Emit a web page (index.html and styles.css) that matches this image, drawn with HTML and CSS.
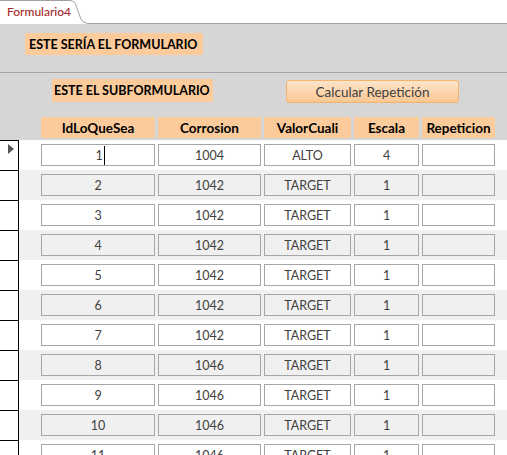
FILE: index.html
```html
<!DOCTYPE html>
<html lang="es">
<head>
<meta charset="utf-8">
<title>Formulario4</title>
<link rel="stylesheet" href="styles.css">
</head>
<body>
<div class="screen">
  <div class="tabbar">
    <div class="tab">
      <svg class="tab-shape" width="90" height="24" viewBox="0 0 90 24">
        <path d="M0 0 H70 Q74 0.5 75.5 4 L80.5 18 Q82.5 23.5 90 23.5 V24 H0 Z" fill="#ffffff"/>
        <path d="M0 0.5 H70 Q74 0.5 75.5 4 L80.5 18 Q82.5 23.5 90 23.5" fill="none" stroke="#a0a0a0" stroke-width="1"/>
      </svg>
      <span class="tab-label">Formulario4</span>
    </div>
    <div class="tab-rule"></div>
  </div>

  <div class="form-header">
    <div class="label label-main">ESTE SERÍA EL FORMULARIO</div>
  </div>

  <div class="subform">
    <div class="sub-top">
      <div class="label label-sub">ESTE EL SUBFORMULARIO</div>
      <button class="btn" type="button">Calcular Repetición</button>
    </div>
    <div class="cols">
      <div class="col-head">IdLoQueSea</div>
      <div class="col-head">Corrosion</div>
      <div class="col-head">ValorCuali</div>
      <div class="col-head">Escala</div>
      <div class="col-head">Repeticion</div>
    </div>
  </div>

  <div class="rows">
    <div class="row">
      <div class="selector"><span class="arrow"></span></div>
      <div class="cells">
        <div class="field"><span class="caret-wrap">1<span class="caret"></span></span></div>
        <div class="field">1004</div>
        <div class="field">ALTO</div>
        <div class="field">4</div>
        <div class="field"></div>
      </div>
    </div>
    <div class="row alt">
      <div class="selector"></div>
      <div class="cells">
        <div class="field">2</div><div class="field">1042</div><div class="field">TARGET</div><div class="field">1</div><div class="field"></div>
      </div>
    </div>
    <div class="row">
      <div class="selector"></div>
      <div class="cells">
        <div class="field">3</div><div class="field">1042</div><div class="field">TARGET</div><div class="field">1</div><div class="field"></div>
      </div>
    </div>
    <div class="row alt">
      <div class="selector"></div>
      <div class="cells">
        <div class="field">4</div><div class="field">1042</div><div class="field">TARGET</div><div class="field">1</div><div class="field"></div>
      </div>
    </div>
    <div class="row">
      <div class="selector"></div>
      <div class="cells">
        <div class="field">5</div><div class="field">1042</div><div class="field">TARGET</div><div class="field">1</div><div class="field"></div>
      </div>
    </div>
    <div class="row alt">
      <div class="selector"></div>
      <div class="cells">
        <div class="field">6</div><div class="field">1042</div><div class="field">TARGET</div><div class="field">1</div><div class="field"></div>
      </div>
    </div>
    <div class="row">
      <div class="selector"></div>
      <div class="cells">
        <div class="field">7</div><div class="field">1042</div><div class="field">TARGET</div><div class="field">1</div><div class="field"></div>
      </div>
    </div>
    <div class="row alt">
      <div class="selector"></div>
      <div class="cells">
        <div class="field">8</div><div class="field">1046</div><div class="field">TARGET</div><div class="field">1</div><div class="field"></div>
      </div>
    </div>
    <div class="row">
      <div class="selector"></div>
      <div class="cells">
        <div class="field">9</div><div class="field">1046</div><div class="field">TARGET</div><div class="field">1</div><div class="field"></div>
      </div>
    </div>
    <div class="row alt">
      <div class="selector"></div>
      <div class="cells">
        <div class="field">10</div><div class="field">1046</div><div class="field">TARGET</div><div class="field">1</div><div class="field"></div>
      </div>
    </div>
    <div class="row">
      <div class="selector"></div>
      <div class="cells">
        <div class="field">11</div><div class="field">1046</div><div class="field">TARGET</div><div class="field">1</div><div class="field"></div>
      </div>
    </div>
  </div>
</div>
</body>
</html>
```

FILE: styles.css
```css
* { box-sizing: border-box; }

html, body {
  margin: 0;
  padding: 0;
  background: #ffffff;
}

.screen {
  width: 507px;
  height: 455px;
  overflow: hidden;
  font-family: Lato, "Open Sans", "DejaVu Sans", sans-serif;
  font-size: 12.5px;
  color: #404040;
}

/* ---- tab strip ---- */
.tabbar {
  display: flex;
  height: 24px;
  background: #ffffff;
}

.tab {
  position: relative;
  width: 90px;
  height: 24px;
  flex: none;
}

.tab-shape {
  position: absolute;
  left: 0;
  top: 0;
}

.tab-label {
  position: relative;
  display: block;
  padding: 4px 0 0 7px;
  font-size: 12px;
  line-height: 15px;
  font-weight: 500;
  color: #a5282c;
}

.tab-rule {
  flex: 1;
  height: 24px;
  border-bottom: 1px solid #a0a0a0;
}

/* ---- form header ---- */
.form-header {
  height: 49px;
  background: #d6d6d6;
  border-bottom: 1px solid #a6a6a6;
  padding: 9px 0 0 25px;
}

.label {
  display: inline-flex;
  align-items: center;
  background: #fbcb9b;
  color: #000000;
  font-weight: 700;
  font-size: 12.5px;
}

.label-main {
  width: 178px;
  height: 22px;
  padding-left: 4px;
}

/* ---- subform header ---- */
.subform {
  height: 67px;
  background: #d6d6d6;
  padding-top: 6px;
}

.sub-top {
  display: flex;
  align-items: flex-start;
  height: 24px;
  padding-left: 52px;
}

.label-sub {
  width: 161px;
  height: 23px;
  padding-left: 2px;
}

.btn {
  margin: 1px 0 0 73px;
  width: 173px;
  height: 23px;
  border: 1px solid #f3b36e;
  border-radius: 3px;
  background: linear-gradient(#fde4ca, #fbc793);
  font-family: inherit;
  font-size: 13.5px;
  color: #404040;
  padding: 0;
}

.cols {
  display: grid;
  grid-template-columns: 114px 103px 87px 65px 73px;
  column-gap: 3px;
  margin-top: 14px;
  padding-left: 41px;
  height: 21px;
}

.col-head {
  background: #fbcb9b;
  color: #000000;
  font-weight: 700;
  font-size: 13.5px;
  display: flex;
  align-items: center;
  justify-content: center;
}

/* ---- rows ---- */
.rows {
  display: flex;
  flex-direction: column;
}

.row {
  display: flex;
  height: 30px;
  flex: none;
}

.selector {
  width: 19px;
  flex: none;
  background: #ffffff;
  border-top: 1px solid #000000;
  border-right: 1px solid #000000;
  position: relative;
}

.arrow {
  position: absolute;
  left: 8px;
  top: 3px;
  width: 0;
  height: 0;
  border-top: 5px solid transparent;
  border-bottom: 5px solid transparent;
  border-left: 6px solid #555555;
}

.cells {
  flex: 1;
  display: grid;
  grid-template-columns: 114px 103px 87px 65px 73px;
  column-gap: 3px;
  align-content: start;
  padding: 4px 0 0 22px;
  background: #ffffff;
}

.row.alt .cells {
  background: #f0f0f0;
}

.field {
  height: 22px;
  border: 1px solid #a6a6a6;
  display: flex;
  align-items: center;
  justify-content: center;
  font-size: 12.5px;
  color: #404040;
}

.caret-wrap {
  display: inline-flex;
  align-items: center;
  padding-left: 4px;
}

.caret {
  display: inline-block;
  width: 1px;
  height: 19px;
  margin-left: 1px;
  background: #000000;
}
```
